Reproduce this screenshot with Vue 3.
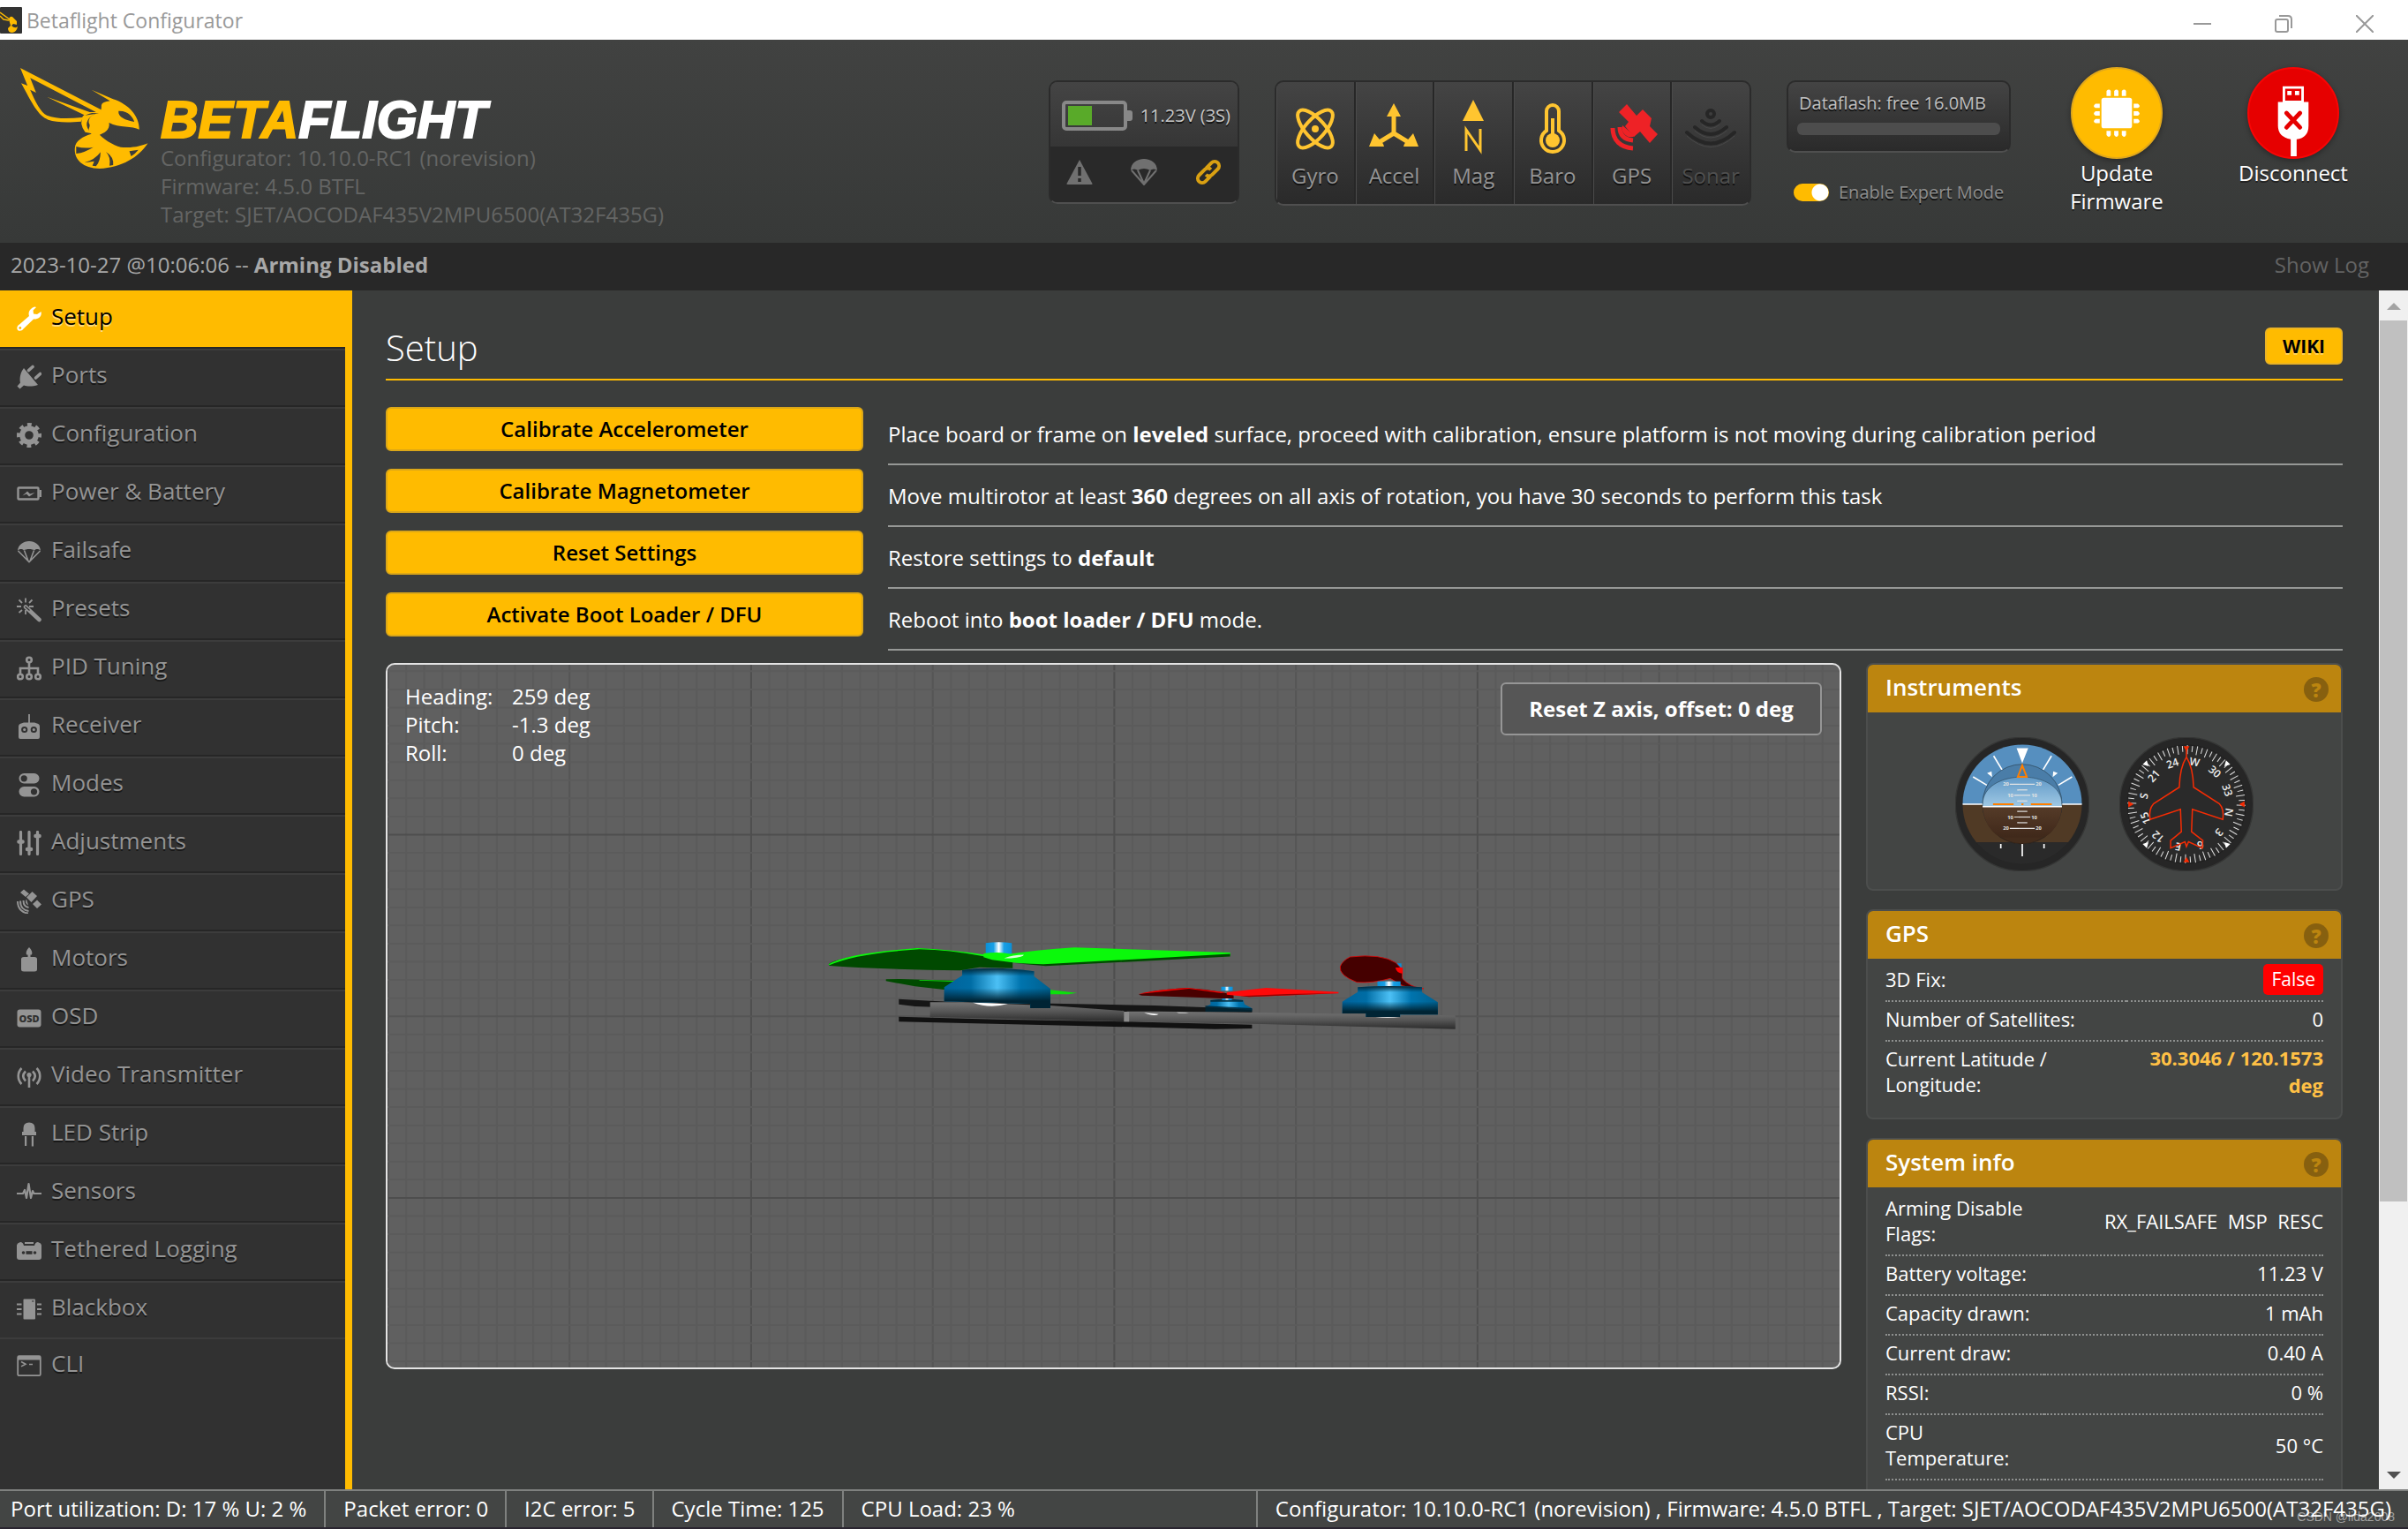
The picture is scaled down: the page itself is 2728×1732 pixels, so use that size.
<script setup>
import { ref } from 'vue'

const expertMode = ref(true)

const icons = {
  wrench: '<path fill="currentColor" d="M3 20.5 14 11c-1.500-4 1-9 6.500-10.500l1.500.5-3.500 3.500.5 4 4 .5L27.500 6c1.500 5-3 9-8.500 8.500L7.500 25.500C6 28 2 28.500.8 26.500-.4 24 .8 22 3 20.500Z"/><circle cx="3.800" cy="24.500" r="1.400" fill="#ffbb00"/>',
  plug: '<path fill="currentColor" d="M8 4 24 23c-6 2-12 2-16 .5L3.500 27.500.5 24.500 4 20.500C2.800 15 4.500 8 8 4Z"/><path stroke="currentColor" stroke-width="3.600" stroke-linecap="round" d="M13.500 6.500 18 2.500M21.500 15l5-4.500"/>',
  gear: '<g fill="none" stroke="currentColor"><circle cx="14" cy="14" r="7.800" stroke-width="6"/><circle cx="14" cy="14" r="12" stroke-width="4" stroke-dasharray="4.800 4.620" stroke-dashoffset="2.400"/></g>',
  battery: '<rect x="1.500" y="7.500" width="23" height="13" rx="1" fill="none" stroke="currentColor" stroke-width="2.400"/><path fill="currentColor" d="M25.500 10h2.500v8h-2.500zM6.500 16.500l5.500-5 3 3 5.500-1.500-6.500 4.500-3-3z"/>',
  parachute: '<path fill="currentColor" d="M1 13C1.500 6 7.500 2 14 2s12.500 4 13 11c-2-2.500-5-2.500-7-.5-2.500-2-9.500-2-12 0-2-2-5-2-7 .5Z"/><path fill="none" stroke="currentColor" stroke-width="1.600" d="M1.500 13 14 25.500 26.500 13M8.500 12.500l4.500 12M19.500 12.500l-4.500 12"/>',
  wand: '<g fill="none" stroke="currentColor"><path stroke-width="4.600" stroke-linecap="round" d="M10 10.500 25.500 25"/><path stroke="#313131" stroke-width="1.200" d="m9.500 10 5 4.500"/><path stroke-width="1.800" d="M10 .5v5M0 10h5M14 10h5M2.500 2.500 6 6M17.500 2.500 14 6M2.500 17 6 14M10 14v5"/></g>',
  tree: '<g fill="none" stroke="currentColor" stroke-width="2.600"><circle cx="14" cy="4.500" r="2.800"/><circle cx="4" cy="23.500" r="2.800"/><circle cx="14" cy="23.500" r="2.800"/><circle cx="24" cy="23.500" r="2.800"/><path d="M14 7.500v13M4 20.500V14h20v6.500"/></g>',
  receiver: '<path stroke="currentColor" stroke-width="1.800" d="M14 0v10"/><path fill="currentColor" d="M2 14q0-3 3-3.500l3-1h12l3 1q3 .5 3 3.500v12q0 2-2 2H4q-2 0-2-2z"/><g fill="none" stroke="#313131" stroke-width="2"><circle cx="8.700" cy="17.500" r="2.600"/><circle cx="19.300" cy="17.500" r="2.600"/></g>',
  modes: '<rect x="2.500" y="1" width="23" height="11.500" rx="5.700" fill="currentColor"/><rect x="2.500" y="16" width="23" height="11.500" rx="5.700" fill="currentColor"/><circle cx="8.200" cy="6.800" r="3.600" fill="#313131"/><circle cx="19.500" cy="21.800" r="3.600" fill="#313131"/>',
  sliders: '<g stroke="currentColor" stroke-width="3.200" stroke-linecap="round"><path d="M4.500 1.500v25M14 1.500v25M23.500 1.500v25"/><path stroke-width="4.600" d="M2.500 12.500h4M12 21h4M21.500 6h4"/></g>',
  satellite: '<g fill="currentColor"><path d="m4 4 4-3.500 6 5-4 3.500zM11 9.500 17.500 3l5.500 5-6.500 7zM18 17l5-4.500 5 5-5 4.500z"/><path d="M13 18.500a4.500 4.500 0 0 1-2-7z"/></g><g fill="none" stroke="currentColor" stroke-width="2"><path d="M7.500 13c0 5 2 7.500 6 8M4 13.500c0 7 4 11 9.500 11.500M1 14c0 9 6 13 12 13.500"/></g>',
  motor: '<path fill="currentColor" d="M14 0c3 3 4 6 3 8.500h-1.500V11H20q3 0 3 2.500V25q0 2.500-3 2.500H8Q5 27.500 5 25V13.500Q5 11 8 11h4.500V8.500H11C10 6 11 3 14 0Z"/>',
  osd: '<rect x=".5" y="4.500" width="27" height="20" rx="3" fill="currentColor"/><text x="14" y="18.500" text-anchor="middle" font-family="Open Sans, sans-serif" font-weight="800" font-size="11" style="text-shadow:none" fill="#313131">OSD</text>',
  antenna: '<g fill="none" stroke="currentColor" stroke-width="2.600"><path d="M5.500 5c-5 5-5 13 0 18M22.500 5c5 5 5 13 0 18M10 8.500c-3.500 3.500-3.500 7.500 0 11M18 8.500c3.500 3.500 3.500 7.500 0 11M14 13v14"/></g><circle cx="14" cy="12.500" r="2.600" fill="currentColor"/>',
  led: '<path fill="currentColor" d="M7.500 11V7q0-6.500 6.500-6.500T20.500 7v4H22v4H6v-4zM9 16h2.200v11H9zM16.800 16H19v11.500h-2.200z"/>',
  pulse: '<path fill="none" stroke="currentColor" stroke-width="2.200" stroke-linejoin="round" d="M0 15h7l2-4 2 9 2.500-16 2.500 16 2-8 1.500 3H28"/>',
  logging: '<path fill="currentColor" d="M1 5.500 4 4q3 0 4 4h12q1-4 4-4l3 1.500 1 2V21q0 3-3 3H3q-3 0-3-3V7.500zM9 4h10v2H9z"/><g fill="#313131"><circle cx="7.500" cy="16" r="1.800"/><circle cx="20.500" cy="16" r="1.800"/><rect x="10.500" y="14.200" width="7" height="3.600"/></g>',
  chip: '<rect x="7.500" y="2.500" width="13.500" height="23" rx="1" fill="currentColor"/><path stroke="currentColor" stroke-width="2.200" d="M0 8.500h5.500M0 14h5.500M0 19.500h5.500M23 8.500h5.500M23 14h5.500M23 19.500h5.500"/><path stroke="#313131" d="M17 5h2.500"/>',
  cli: '<rect x="1.200" y="3.200" width="25.600" height="22" rx="1.500" fill="none" stroke="currentColor" stroke-width="1.800"/><path fill="currentColor" d="M1 3h26v4.500H1z"/><path fill="none" stroke="currentColor" stroke-width="1.600" d="m5 9.500 5 2.700-5 2.700M14 12.500h4"/>',
}

const tabs = [
  ['Setup', 'wrench'], ['Ports', 'plug'], ['Configuration', 'gear'], ['Power & Battery', 'battery'],
  ['Failsafe', 'parachute'], ['Presets', 'wand'], ['PID Tuning', 'tree'], ['Receiver', 'receiver'],
  ['Modes', 'modes'], ['Adjustments', 'sliders'], ['GPS', 'satellite'], ['Motors', 'motor'],
  ['OSD', 'osd'], ['Video Transmitter', 'antenna'], ['LED Strip', 'led'], ['Sensors', 'pulse'],
  ['Tethered Logging', 'logging'], ['Blackbox', 'chip'], ['CLI', 'cli'],
]

const sensors = [
  { name: 'Gyro', art: '<g fill="none" stroke="#ffc530" stroke-width="4"><ellipse cx="32" cy="33" rx="11" ry="27" transform="rotate(42 32 33)"/><ellipse cx="32" cy="33" rx="11" ry="27" transform="rotate(-42 32 33)"/></g><circle cx="32" cy="33" r="4" fill="#ffc530"/>' },
  { name: 'Accel', art: '<path stroke="#ffc530" stroke-width="5" fill="none" d="M31 16v22L13 49M31 38l18 11"/><path fill="#ffc530" d="m31 4 8 15H23zM3 53l6-15 10 12 1 3zM59 53l-6-15-10 12-1 3z"/>' },
  { name: 'Mag', art: '<path fill="#ffc530" d="m32 0 12 24H20z"/><path fill="none" stroke="#ffc530" stroke-width="3" d="M24 58V34l16 23V33"/>' },
  { name: 'Baro', art: '<path fill="none" stroke="#ffc530" stroke-width="4" d="M25 35V13a7 7 0 0 1 14 0v22a13 13 0 1 1-14 0Z"/><circle cx="32" cy="46" r="8" fill="#ffc530"/><path stroke="#ffc530" stroke-width="4" d="M32 21v22"/>' },
  { name: 'GPS', art: '<g fill="#ee2226"><path d="m17 14 9-9 11 13 7-7 10 10-2 9 9 9-9 10-11-13-7 6-10-12 4-5z"/><path d="M35 41a10 10 0 0 1-14-12z"/></g><g fill="none" stroke="#ee2226" stroke-width="5"><path d="M18 31c0 9 5 14 15 15M10 32c0 14 9 22 23 23"/></g>' },
  { name: 'Sonar', off: true, art: '<g fill="none" stroke="#262626" stroke-width="4" stroke-linecap="round"><circle cx="32" cy="16" r="4"/><path d="M22 24q10 9 20 0M14 31q18 16 36 0M5 37q27 25 54 0"/></g><g fill="none" stroke="#484848" stroke-width="1"><path d="M22 28q10 9 20 0M14 35q18 16 36 0M5 41q27 25 54 0"/></g>' },
]

const actions = [
  { label: 'Calibrate Accelerometer', text: ['Place board or frame on ', 'leveled', ' surface, proceed with calibration, ensure platform is not moving during calibration period'] },
  { label: 'Calibrate Magnetometer', text: ['Move multirotor at least ', '360', ' degrees on all axis of rotation, you have 30 seconds to perform this task'] },
  { label: 'Reset Settings', text: ['Restore settings to ', 'default', ''] },
  { label: 'Activate Boot Loader / DFU', text: ['Reboot into ', 'boot loader / DFU', ' mode.'] },
]

const attitude = [['Heading:', '259 deg'], ['Pitch:', '-1.3 deg'], ['Roll:', '0 deg']]

const systemInfo = [
  ['Arming Disable Flags:', 'RX_FAILSAFE  MSP  RESC'],
  ['Battery voltage:', '11.23 V'],
  ['Capacity drawn:', '1 mAh'],
  ['Current draw:', '0.40 A'],
  ['RSSI:', '0 %'],
  ['CPU Temperature:', '50 °C'],
]

const statusCells = ['Port utilization: D: 17 % U: 2 %', 'Packet error: 0', 'I2C error: 5', 'Cycle Time: 125', 'CPU Load: 23 %']

const step = 20.56
const gridX = Array.from({ length: 81 }, (_, i) => ({ at: 0.5 + i * step, kind: (i % 20 === 0) ? 'major' : (i % 10 === 0 ? 'mid' : 'minor') }))
const gridY = Array.from({ length: 40 }, (_, i) => ({ at: -13 + i * step, kind: (i % 20 === 10) ? 'major' : (i % 10 === 0 ? 'mid' : 'minor') }))

const heading = 259
const compass = ['N', '3', '6', 'E', '12', '15', 'S', '21', '24', 'W', '30', '33'].map((t, i) => ({ t, a: i * 30 - heading }))
const ticks = Array.from({ length: 72 }, (_, i) => i * 5 - heading)
const ladder = [
  { y: 235, w: 84, t: '20' }, { y: 254, w: 34 }, { y: 272, w: 54, t: '10' }, { y: 291, w: 34 },
  { y: 326, w: 34 }, { y: 345, w: 54, t: '10' }, { y: 364, w: 34 }, { y: 383, w: 84, t: '20' },
]
</script>

<template>
  <div class="app">
    <div class="titlebar">
      <svg class="appicon" viewBox="0 0 25 30"><rect width="25" height="30" rx="1" fill="#333" /><path d="M0 6l11 8M0 10l4 4 6 1" stroke="#fb0" stroke-width="1.500" fill="none" /><path d="M10 14q1-4 4-3l5 5v4l-4-1-2 2q4 4 7 1-1 6-6 7-5 0-5-5l3-3z" fill="#fb0" /></svg>
      <span class="apptitle">Betaflight Configurator</span>
      <button aria-label="Minimize"><svg viewBox="0 0 20 20"><path d="M0 10h20" /></svg></button>
      <button aria-label="Restore"><svg viewBox="0 0 20 20"><rect x="1" y="5" width="14" height="14" rx="2" /><path d="M5 1h10q4 0 4 4v10" /></svg></button>
      <button aria-label="Close"><svg viewBox="0 0 20 20"><path d="m0 0 20 20M20 0 0 20" /></svg></button>
    </div>

    <header class="header">
      <svg class="logo" viewBox="46 228 284 342" preserveAspectRatio="none">
        <g fill="#ffbb00">
          <path fill-rule="evenodd" d="M46 228 232 375 222 382 205 381C190 385 183 398 181 410 150 414 125 413 108 404 85 390 73 350 48 280L62 288ZM68 262 81 312 68 302C80 345 92 380 105 389 125 402 155 400 183 396L188 388 105 326 200 378 214 378Z" />
          <path fill-rule="evenodd" d="M204 302 252 334C285 350 310 390 310 437 295 425 265 432 243 414 246 440 230 450 222 455 235 475 260 497 275 498 300 500 315 492 329 484 310 530 270 568 222 570 185 568 165 540 167 500 168 475 185 460 204 452 190 440 205 430 198 415 196 400 205 385 219 382 225 378 226 370 226 355 228 342 240 342 245 340ZM264 374C262 395 280 405 299 411 296 395 285 372 264 374ZM288 511 292 528Q302 518 308 506Z" />
          <path d="M186 390Q175 415 190 446L203 450Q180 410 212 384Z" />
        </g>
        <path fill="#3b3c3b" d="M170 495Q190 503 208 497 190 515 170 519ZM188 550Q212 540 224 514 224 545 214 562L206 560 210 545ZM252 558Q254 530 236 513 247 530 244 560Z" />
      </svg>
      <div class="brand">
        <div class="wordmark"><span>BETA</span>FLIGHT</div>
        <div class="info">Configurator: 10.10.0-RC1 (norevision)<br />Firmware: 4.5.0 BTFL<br />Target: SJET/AOCODAF435V2MPU6500(AT32F435G)</div>
      </div>

      <div class="gauges">
        <div class="power">
          <div class="power-top">
            <svg width="80" height="34" viewBox="0 0 80 34"><rect x="2" y="2" width="70" height="30" rx="3" fill="none" stroke="#888" stroke-width="4" /><path d="M74 11h3q3 0 3 3v6q0 3-3 3h-3z" fill="#888" /><path d="M7 6h27v22H7z" fill="#59aa29" /></svg>
            <span>11.23V (3S)</span>
          </div>
          <div class="power-bottom">
            <svg viewBox="0 0 30 30"><path d="M15 1 29.500 28q.5 1-1 1h-27q-1.500 0-1-1z" fill="#707070" /><path d="M15 9v10M15 22v4" stroke="#292929" stroke-width="3.500" /></svg>
            <svg viewBox="0 0 30 30"><path d="M0 13C0 5 7 0 15 0s15 5 15 13q-4-3-8 0-7-4-14 0-4-3-8 0Z" fill="#707070" /><path d="M1 13 15 29 29 13M8 13l7 15 7-15" fill="none" stroke="#707070" stroke-width="2" /></svg>
            <svg viewBox="0 0 30 30"><g fill="none" stroke="#d9a012" stroke-width="4" transform="rotate(-45 15 15)"><path d="M13 20H5a5 5 0 0 1 0-10h9q5 0 5 5" /><path d="M17 10h8a5 5 0 0 1 0 10h-9q-5 0-5-5" /></g></svg>
          </div>
        </div>

        <ul class="sensors">
          <li v-for="s in sensors" :key="s.name" :class="{ off: s.off }">
            <svg viewBox="0 0 64 64" v-html="s.art"></svg>
            <span>{{ s.name }}</span>
          </li>
        </ul>

        <div class="flash">
          <div class="flash-box"><span>Dataflash: free 16.0MB</span><div class="flash-bar"></div></div>
          <label class="expert"><input v-model="expertMode" type="checkbox" />Enable Expert Mode</label>
        </div>

        <button class="round">
          <svg class="disc amber" viewBox="0 0 104 104"><g fill="#fff"><rect x="34" y="34" width="36" height="36" rx="3" /><path d="M40 26q3-3 5 0v6h-5zM49 26q3-3 5 0v6h-5zM58 26q3-3 5 0v6h-5zM40 73h5v5q-2 4-5 0zM49 73h5v5q-2 4-5 0zM58 73h5v5q-2 4-5 0zM32 41v5h-5q-4-2 0-5zM32 50v5h-5q-4-2 0-5zM32 59v5h-5q-4-2 0-5zM72 41v5h5q4-2 0-5zM72 50v5h5q4-2 0-5zM72 59v5h5q4-2 0-5z" /></g></svg>
          <span>Update Firmware</span>
        </button>
        <button class="round">
          <svg class="disc red" viewBox="0 0 104 104"><path d="M41 22h22v17H41z" fill="none" stroke="#fff" stroke-width="3" /><path d="M45 26h5v5h-5zM54 26h5v5h-5zM34 39h36v28q0 14-14 16v20h-7V83Q34 80 34 67z" fill="#fff" /><path d="m44 52 16 17M60 52 44 69" stroke="#e60000" stroke-width="5" stroke-linecap="round" /></svg>
          <span>Disconnect</span>
        </button>
      </div>
    </header>

    <div class="log"><span>2023-10-27 @10:06:06 -- <b>Arming Disabled</b></span><a href="#">Show Log</a></div>

    <div class="body">
      <nav class="tabs">
        <a v-for="([name, icon], i) in tabs" :key="name" href="#" :class="{ active: i === 0 }">
          <svg viewBox="0 0 28 28" fill="none" v-html="icons[icon]"></svg>{{ name }}
        </a>
      </nav>

      <main class="content">
        <div class="heading"><h1>Setup</h1><a class="wiki" href="#">WIKI</a></div>

        <div class="actions">
          <div v-for="a in actions" :key="a.label" class="action">
            <button>{{ a.label }}</button>
            <p>{{ a.text[0] }}<b>{{ a.text[1] }}</b>{{ a.text[2] }}</p>
          </div>
        </div>

        <div class="columns">
          <section class="model">
            <svg class="scene" viewBox="0 0 1644 796" preserveAspectRatio="xMidYMid slice">
              <defs>
                <linearGradient id="bell"><stop offset="0" stop-color="#00629a" /><stop offset=".25" stop-color="#006da5" /><stop offset=".5" stop-color="#4cc0f5" /><stop offset=".72" stop-color="#0074ae" /><stop offset="1" stop-color="#00608f" /></linearGradient>
                <linearGradient id="bellShade" x2="0" y2="1"><stop offset="0" stop-color="#002434" /><stop offset=".2" stop-color="#002434" stop-opacity="0" /><stop offset=".5" stop-color="#002434" stop-opacity="0" /><stop offset=".82" stop-color="#002434" /></linearGradient>
                <linearGradient id="shaft"><stop offset="0" stop-color="#0a8fd6" /><stop offset=".3" stop-color="#19a0e6" /><stop offset=".5" stop-color="#fff" /><stop offset=".7" stop-color="#19a0e6" /><stop offset="1" stop-color="#0a8fd6" /></linearGradient>
                <linearGradient id="arm" x2="0" y2="1"><stop offset="0" stop-color="#747474" /><stop offset=".5" stop-color="#555" /><stop offset="1" stop-color="#2c2c2c" /></linearGradient>
              </defs>
              <line v-for="g in gridX" :key="'x' + g.at" :x1="g.at" :x2="g.at" y1="0" y2="796" :class="g.kind" />
              <line v-for="g in gridY" :key="'y' + g.at" :y1="g.at" :y2="g.at" x1="0" x2="1644" :class="g.kind" />
              <g transform="translate(481 287) scale(.4847 .3333)">
                <path d="M202 275 275 281 345 286 560 290 800 297 1027 309V320L600 318 240 300 202 293Z" fill="#161616" />
                <path d="M172 208 205 207 330 212V247L240 232 172 214Z" fill="#004a00" /><path d="M250 210l80 3v3l-80-4zM556 244l62 10-20 5h-42z" fill="#0be00b" />
                <path d="M930 279q38-8 76 0l4 14 17 14v6L918 301l12-8Z" fill="url(#bell)" />
                <path d="M930 279q38-8 76 0v5h-76zM918 298l109 8v12H918z" fill="#002434" opacity=".85" />
                <path d="M955 233h27v14h-27zM957 272h23v6h-23z" fill="url(#shaft)" />
                <path d="M762 260Q800 244 870 238 920 240 968 256L984 262V273H955L905 270 770 263Z" fill="#490000" /><path d="M762 258Q800 243 878 237L965 252 955 255 880 240Z" fill="#ee0000" />
                <path d="M968 252 1060 237 1229 251V256L1020 268 968 260Z" fill="#ff0a0a" /><path d="M1229 255 1020 268 1000 265 1110 258Z" fill="#960000" />
                <path d="M202 335 430 344 730 352 1027 362V375L940 377 600 365 202 352Z" fill="#111" />
                <path d="M735 317 810 317 985 320 1502 331V377L1050 360 860 355 735 350Z" fill="url(#arm)" />
                <path d="M275 286 350 286 560 298 728 315V351L275 336Z" fill="url(#arm)" />
                <path d="M728 318h12v34h-12z" fill="#8b8b8b" />
                <path d="M375 287q40 22 82 4zM775 322q25 14 34 4zM850 320q10 5 30 1z" fill="#fff" />
                <path d="M350 176Q432 162 518 181V198L556 240V306H509V291L420 287 308 283V235L350 195Z" fill="url(#bell)" />
                <path d="M350 176Q432 162 518 181V198L556 240V306H509V291L420 287 308 283V235L350 195Z" fill="url(#bellShade)" />
                <path d="M405 85q30-6 61 0v40h-61z" fill="url(#shaft)" />
                <path d="M38 157Q55 130 245 103 320 108 400 126L468 140V170L390 167 345 178Q180 175 40 162Z" fill="#004900" />
                <path d="M38 157Q80 120 245 102 320 106 400 124V130Q320 108 250 106 100 120 40 160ZM400 120q40-6 62 2 60-13 150-22L976 117V129L545 161 468 151 420 142 400 133Z" fill="#0bf90b" />
                <path d="M976 122V131L545 163 470 153 540 157Z" fill="#004a00" /><path d="M448 137q20-12 46-12 0 8-30 12z" fill="#d8ffd8" />
                <path d="M1364 154h12v14h-12z" fill="#0a8fd6" />
                <path d="M1256 132Q1330 120 1363 152L1378 175V205Q1395 235 1428 240 1385 240 1370 222L1350 205Q1310 222 1272 218 1230 195 1233 165 1238 145 1256 132Z" fill="#450000" stroke="#e00b0b" stroke-width="2" /><path d="M1362 168h17v20q-14 0-17-20Z" fill="#f00" />
                <path d="M1320 215h54v17h-54z" fill="url(#shaft)" />
                <path d="M1274 235q75-8 150 0v17l37 34v42h-88v8h-80v-12h-55v-40l36-33Z" fill="url(#bell)" />
                <path d="M1274 235q75-8 150 0v17l37 34v42h-88v8h-80v-12h-55v-40l36-33Z" fill="url(#bellShade)" />
                <path d="M1315 336q30 6 58 0z" fill="#ddd" />
              </g>
            </svg>
            <dl class="attitude">
              <template v-for="[k, v] in attitude" :key="k"><dt>{{ k }}</dt><dd>{{ v }}</dd></template>
            </dl>
            <button class="resetz">Reset Z axis, offset: 0 deg</button>
          </section>

          <aside class="side">
            <section class="panel">
              <h2>Instruments<span class="help">?</span></h2>
              <div class="instruments">
                <svg viewBox="108 77 450 450">
                  <defs>
                    <clipPath id="dial"><circle cx="333" cy="302" r="200" /></clipPath>
                    <clipPath id="ball"><path d="M200 302C200 180 466 180 466 302 466 350 440 402 400 414H266C226 402 200 350 200 302Z" /></clipPath>
                    <linearGradient id="sky" x2="0" y2="1"><stop offset="0" stop-color="#5a94c4" /><stop offset="1" stop-color="#9fc8e4" /></linearGradient>
                    <linearGradient id="ground" x2="0" y2="1"><stop offset="0" stop-color="#553b28" /><stop offset="1" stop-color="#3e2719" /></linearGradient>
                  </defs>
                  <circle cx="333" cy="302" r="224" fill="#262626" stroke="#353635" stroke-width="4" />
                  <g clip-path="url(#dial)">
                    <path d="M130 100h410v202H130z" fill="#568fbf" /><path d="M130 302h410v128H130z" fill="#503a25" /><path d="M130 430h410v80H130z" fill="#2a2a2a" />
                    <circle cx="333" cy="301" r="133" fill="#4a7da8" stroke="#2d4658" stroke-width="2" />
                    <path d="M200 302h266a133 133 0 0 1-266 0z" fill="#432c1c" stroke="#2b1c12" stroke-width="2" />
                    <g clip-path="url(#ball)"><path d="M200 200h266v110H200z" fill="url(#sky)" /><path d="M200 310h266v110H200z" fill="url(#ground)" /></g>
                    <path d="M200 302C200 180 466 180 466 302" fill="none" stroke="#2f4f66" stroke-width="2" />
                    <path d="M132 302h67M467 302h67M200 310h266" stroke="#fff" stroke-width="4" />
                    <path d="m237 140 28 46M431 140l-28 46M168 210l46 28M500 210l-46 28M261 435v15M406 435v15M333 435v42" stroke="#fff" stroke-width="5" />
                    <path d="M314 114h39l-20 50zM215 198l15-6 2 19zM452 198l-15-6-2 19z" fill="#fff" />
                  </g>
                  <g v-for="(l, i) in ladder" :key="i">
                    <path :d="`M${333 - l.w / 2} ${l.y}h${l.w}`" stroke="#e4e4e4" stroke-width="3.500" />
                    <template v-if="l.t"><text :x="330 - l.w / 2" :y="l.y + 6" text-anchor="end" class="rung">{{ l.t }}</text><text :x="336 + l.w / 2" :y="l.y + 6" class="rung">{{ l.t }}</text></template>
                  </g>
                  <path d="m333 172 15 38h-30z" fill="none" stroke="#ff7f00" stroke-width="6" />
                  <path d="M235 302h69M362 302h70M330 302h7" stroke="#ff7f00" stroke-width="6" />
                </svg>
                <svg viewBox="666 77 450 450">
                  <circle cx="891" cy="302" r="224" fill="#262626" stroke="#353635" stroke-width="4" />
                  <circle cx="891" cy="302" r="198" fill="#2a2a2a" stroke="#202020" stroke-width="3" />
                  <path v-for="(a, i) in ticks" :key="a" :d="i % 2 ? 'M891 106v20' : 'M891 104v30'" stroke="#ddd" stroke-width="3" :transform="`rotate(${a} 891 302)`" />
                  <text v-for="c in compass" :key="c.t" x="891" y="170" class="mark" :transform="`rotate(${c.a} 891 302)`">{{ c.t }}</text>
                  <path v-for="a in [45, 135, 225, 315]" :key="a" d="M881 104h20l-10 18z" fill="#fff" :transform="`rotate(${a} 891 302)`" />
                  <path v-for="a in [0, 90, 180, 270]" :key="a" d="M881 107h20l-10 18z" fill="#f42c04" :transform="`rotate(${a} 891 302)`" />
                  <path d="M891 110V144M891 144Q913 178 915 245L1002 301Q1018 318 1013 353L911 319 908 394 946 424 944 449 898 428 891 444 886 428 838 449V424L874 394 871 319 769 353Q764 318 780 301L867 245Q869 178 891 144Z" fill="none" stroke="#f42c04" stroke-width="4.500" />
                </svg>
              </div>
            </section>

            <section class="panel">
              <h2>GPS<span class="help">?</span></h2>
              <table class="gps">
                <tbody>
                  <tr><th scope="row">3D Fix:</th><td><span class="badge">False</span></td></tr>
                  <tr><th scope="row">Number of Satellites:</th><td>0</td></tr>
                  <tr><th scope="row">Current Latitude / Longitude:</th><td><a href="#">30.3046 / 120.1573 deg</a></td></tr>
                </tbody>
              </table>
            </section>

            <section class="panel">
              <h2>System info<span class="help">?</span></h2>
              <table class="sys">
                <tbody><tr v-for="[k, v] in systemInfo" :key="k"><th scope="row">{{ k }}</th><td>{{ v }}</td></tr></tbody>
              </table>
            </section>
          </aside>
        </div>
      </main>

      <div class="scroll">
        <svg viewBox="0 0 16 8"><path d="M8 0l8 8H0z" fill="#a3a3a3" /></svg>
        <div class="thumb"></div>
        <svg viewBox="0 0 16 8"><path d="M8 8 0 0h16z" fill="#505050" /></svg>
      </div>
    </div>

    <footer class="footer">
      <span v-for="c in statusCells" :key="c" class="cell">{{ c }}</span>
      <span class="cell target">Configurator: 10.10.0-RC1 (norevision) , Firmware: 4.5.0 BTFL , Target: SJET/AOCODAF435V2MPU6500(AT32F435G)</span>
      <span class="watermark">CSDN @lida2008</span>
    </footer>
  </div>
</template>

<style>
body { margin: 0; background: #3b3d3c; }
</style>

<style scoped>
* { box-sizing: border-box; }
.app { display: flex; flex-direction: column; height: 100vh; font: 24px/32px "Open Sans", "Noto Sans CJK SC", sans-serif; color: #fff; overflow: hidden; }
button { font: inherit; border: 0; background: none; padding: 0; cursor: pointer; }
a { color: inherit; text-decoration: none; }
svg { flex: none; display: block; }

.titlebar { display: flex; align-items: center; height: 45px; flex: none; background: #fff; color: #999; font-size: 23px; padding: 0 39px 0 0; }
.appicon { width: 25px; height: 30px; margin-right: 5px; }
.apptitle { flex: 1; }
.titlebar button { width: 20px; margin-left: 72px; padding-top: 8px; }
.titlebar button svg { width: 20px; height: 20px; fill: none; stroke: #999; stroke-width: 2; }

.header { display: flex; align-items: flex-start; height: 230px; flex: none; padding: 0 30px 0 23px; background: linear-gradient(#414241, #373938); }
.logo { width: 145px; height: 114px; margin: 32px 14px 0 0; }
.brand { margin-top: 64px; }
.wordmark { font: italic bold 59px/54px "Liberation Sans", sans-serif; -webkit-text-stroke: 2px currentColor; }
.wordmark span { color: #ffbb00; }
.info { color: #646564; white-space: nowrap; }
.gauges { display: flex; align-items: flex-start; margin-left: auto; }
.power, .sensors, .flash-box { border: 2px solid #2b2b2b; border-bottom-color: #4f4f4f; border-radius: 10px; background: linear-gradient(#444, #2a2a2a); text-shadow: 0 2px #111; overflow: hidden; }
.power { width: 216px; height: 140px; margin: 46px 40px 0 0; }
.power-top { display: flex; align-items: center; justify-content: space-between; height: 73px; padding: 2px 8px 0 13px; font-size: 20px; color: #c8c8c8; background: linear-gradient(#444, #363636); }
.power-bottom { display: flex; justify-content: space-between; padding: 14px 18px; height: 65px; background: #292929; }
.power-bottom svg { width: 30px; height: 30px; }
.sensors { display: flex; list-style: none; width: 540px; height: 142px; margin: 46px 40px 0 0; padding: 0; color: #949494; }
.sensors li { flex: 1; display: flex; flex-direction: column; align-items: center; padding-top: 20px; gap: 7px; border-right: 2px solid #272727; box-shadow: inset 1px 0 #4a4a4a; }
.sensors li:last-child { border-right: 0; }
.sensors svg { width: 64px; height: 64px; }
.sensors span { font-size: 24px; line-height: 30px; }
.sensors .off { color: #4f4f4f; }
.flash { width: 254px; margin: 46px 20px 0 0; font-size: 20px; }
.flash-box { height: 82px; padding: 8px 10px 8px 12px; color: #c0c0c0; }
.flash-bar { height: 14px; margin: 6px 0 0 -2px; border-radius: 6px; background: #4d4d4d; }
.expert { display: flex; align-items: center; gap: 11px; margin-top: 29px; padding-left: 8px; color: #8e8e8e; line-height: 32px; white-space: nowrap; text-shadow: 0 2px #111; }
.expert input { appearance: none; width: 40px; height: 20px; margin: 0; border-radius: 10px; background: #ffbb00 radial-gradient(circle at 30px 10px, #fff 9px, transparent 10px); }
.round { width: 200px; margin-top: 31px; color: #fff; text-shadow: 0 2px #222; }
.round span { display: block; width: 140px; margin: 0 auto; }
.disc { width: 104px; height: 104px; margin: 0 auto; border-radius: 50%; box-shadow: 0 2px 6px #0005; }
.amber { background: #ffbb00; border: 2px solid #e0a81c; }
.red { background: #e60000; border: 2px solid #f80505; }

.log { display: flex; justify-content: space-between; align-items: center; height: 54px; flex: none; padding: 0 44px 4px 12px; background: #282828; color: #a8a8a8; }
.log b { font-weight: 700; }
.log a { color: #636363; }

.body { display: flex; flex: 1; min-height: 0; }
.tabs { width: 399px; flex: none; background: #313131; border-right: 8px solid #ffbb00; color: #949494; font-size: 26px; }
.tabs a { display: flex; align-items: center; height: 66px; padding: 0 0 8px 19px; gap: 11px; border-top: 2px solid #3c3c3c; border-bottom: 2px solid #262626; text-shadow: 0 2px #181818; }
.tabs a:nth-last-child(2) { border-bottom: 0; height: 64px; }
.tabs a:last-child { border-bottom: 0; height: 64px; }
.tabs svg { width: 28px; height: 28px; margin-top: 6px; }
.tabs .active { background: #ffbb00; color: #000; border-top-color: #ffbb00; text-shadow: 0 2px #ffdc80; }
.tabs .active svg { color: #fff; }

.content { flex: 1; min-width: 0; padding: 42px 41px 0 38px; background: #3b3d3c; overflow: hidden; }
.heading { display: flex; justify-content: space-between; height: 60px; border-bottom: 2px solid #ffbb00; }
h1 { margin: 0; font-size: 40px; line-height: 45px; font-weight: 300; }
.wiki { width: 88px; height: 42px; border: 2px solid #eab325; border-radius: 6px; background: #ffbb00; color: #000; font-size: 21px; line-height: 38px; font-weight: 700; text-align: center; text-shadow: 0 2px #ffd35a; }
.actions { display: flex; flex-direction: column; gap: 4px; margin: 30px 0 14px; }
.action { display: flex; gap: 28px; align-items: flex-start; }
.action button { width: 541px; height: 50px; flex: none; border: 2px solid #dba718; border-radius: 6px; background: #ffbb00; color: #000; font-weight: 600; }
.action p { flex: 1; margin: 0; height: 66px; line-height: 62px; border-bottom: 2px solid #969896; }
.action b { font-weight: 700; }

.columns { display: grid; grid-template-columns: 1fr 540px; gap: 28px; align-items: start; }
.model { position: relative; height: 800px; border: 2px solid #e4e4e4; border-radius: 10px; background: #606060; overflow: hidden; }
.scene { position: absolute; inset: 0; width: 100%; height: 100%; }
.minor { stroke: #5b5b5b; stroke-width: 2; }
.mid { stroke: #555; stroke-width: 2; }
.major { stroke: #4e4e4e; stroke-width: 2; }
.attitude { position: absolute; left: 20px; top: 20px; margin: 0; display: grid; grid-template-columns: 121px auto; }
.attitude dd { margin: 0; }
.resetz { position: absolute; right: 20px; top: 20px; width: 364px; height: 60px; border: 2px solid #969696; border-radius: 6px; background: #565656; color: #fff; font-weight: 700; }

.side { display: grid; gap: 21px; }
.panel { border: 2px solid #4c4e4d; border-radius: 8px; background: #434544; overflow: hidden; font-size: 22px; line-height: 29px; }
h2 { display: flex; justify-content: space-between; align-items: center; margin: 0; height: 54px; padding: 0 14px 4px 20px; background: #bc850f; font-size: 26px; font-weight: 600; }
.help { width: 28px; height: 28px; margin-top: 6px; border-radius: 50%; background: #87600f; color: #bc850f; font-size: 22px; line-height: 28px; font-weight: 800; text-align: center; }
.instruments { display: flex; justify-content: center; gap: 34px; padding: 28px 0 20px; }
.instruments svg { width: 152px; height: 152px; }
.rung { font: 700 17px "Open Sans", sans-serif; fill: #e4e4e4; }
.mark { font: 600 36px "Open Sans", sans-serif; fill: #eee; text-anchor: middle; }
table { width: 496px; margin: 4px 0 14px 20px; border-collapse: collapse; table-layout: fixed; }
th { font-weight: 400; text-align: left; padding: 5px 10px 9px 0; }
.gps th { width: 273px; }
.sys { margin-bottom: 64px; }
.sys th { width: 180px; }
td { text-align: right; padding: 0 0 4px; white-space: pre; }
.gps td { white-space: normal; }
tr { border-bottom: 2px dotted #8e908f; }
.gps tr:last-child { border-bottom: 0; }
.gps a { color: #ffc045; font-weight: 700; line-height: 31px; }
.badge { display: inline-block; padding: 3px 9px; border-radius: 5px; background: #f00; font-size: 21px; }

.scroll { display: flex; flex-direction: column; align-items: center; width: 33px; background: #f0f0f0; padding: 14px 0 12px; }
.scroll svg { width: 16px; height: 8px; }
.thumb { width: 31px; height: 998px; margin: 12px 0 auto; background: #c0c0c0; }

.footer { position: relative; display: flex; height: 45px; flex: none; border-top: 2px solid #7f817f; border-bottom: 2px solid #2a2530; background: #434544; line-height: 40px; white-space: nowrap; }
.cell { padding: 0 19px 0 20px; border-right: 2px solid #7f817f; }
.cell:first-child, .cell:nth-child(4) { padding-right: 20px; }
.cell:first-child { padding-left: 12px; }
.cell:nth-child(5) { border-right: 0; }
.target { margin-left: auto; border-right: 0; border-left: 2px solid #7f817f; }
.watermark { position: absolute; right: 15px; bottom: 2px; font: 14px/20px "Liberation Sans", sans-serif; color: #ffffff80; }
</style>
